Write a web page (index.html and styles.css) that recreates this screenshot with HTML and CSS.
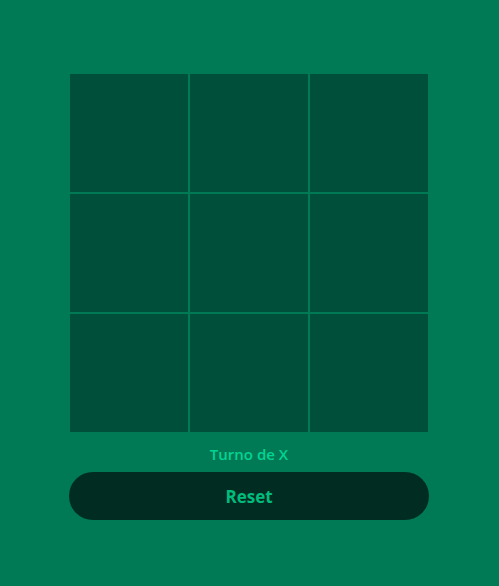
FILE: index.html
```html
<!DOCTYPE html>
<html lang="es">
<head>
<meta charset="utf-8">
<title>Tres en raya</title>
<link rel="stylesheet" href="styles.css">
</head>
<body>
<main class="game">
  <div class="board">
    <button class="cell"></button>
    <button class="cell"></button>
    <button class="cell"></button>
    <button class="cell"></button>
    <button class="cell"></button>
    <button class="cell"></button>
    <button class="cell"></button>
    <button class="cell"></button>
    <button class="cell"></button>
  </div>
  <p class="status">Turno de X</p>
  <button class="reset">Reset</button>
</main>
</body>
</html>
```

FILE: styles.css
```css
html, body {
  margin: 0;
  padding: 0;
}
body {
  background: #007a55;
  font-family: "Open Sans", "Noto Sans", sans-serif;
  min-height: 586px;
}
.game {
  display: flex;
  flex-direction: column;
  align-items: center;
  padding-top: 74px;
  padding-right: 1px;
}
.board {
  display: grid;
  grid-template-columns: repeat(3, 118px);
  grid-template-rows: repeat(3, 118px);
  gap: 2px;
}
.cell {
  background: #004f3b;
  border: none;
  margin: 0;
  padding: 0;
}
.status {
  margin: 12px 0 0;
  height: 20px;
  line-height: 20px;
  font-size: 15px;
  font-weight: 600;
  color: #00d492;
}
.reset {
  margin-top: 8px;
  width: 360px;
  height: 48px;
  border: none;
  border-radius: 24px;
  background: #002c22;
  color: #00bc7d;
  font-family: "Open Sans", "Noto Sans", sans-serif;
  font-size: 17px;
  font-weight: 700;
}
```
